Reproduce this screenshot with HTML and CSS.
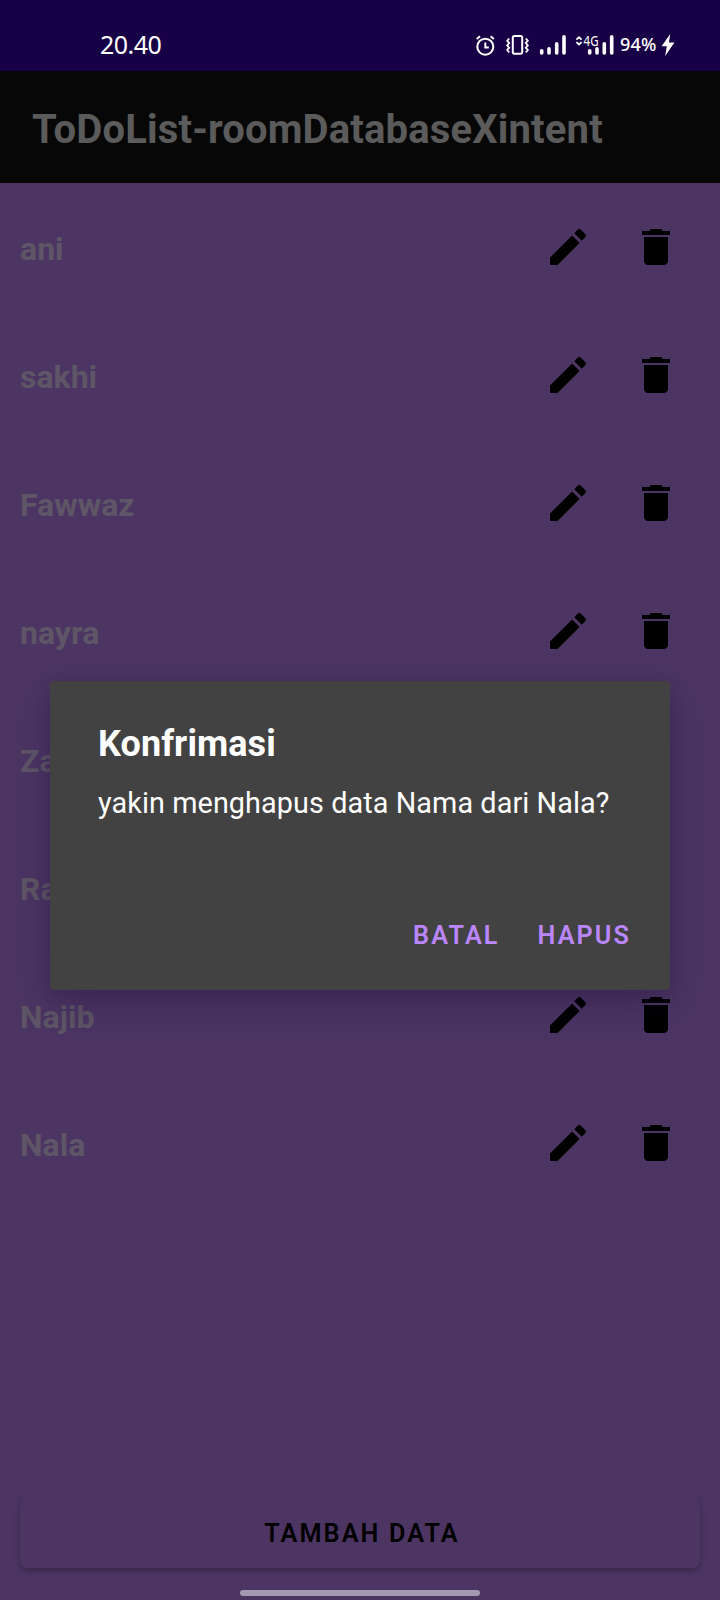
FILE: index.html
```html
<!DOCTYPE html>
<html lang="id">
<head>
<meta charset="utf-8">
<title>ToDoList-roomDatabaseXintent</title>
<link rel="stylesheet" href="styles.css">
</head>
<body>
<svg width="0" height="0" class="symbols">
  <symbol id="edit" viewBox="0 0 24 24"><path d="M3 17.25V21h3.75L17.81 9.94l-3.75-3.75L3 17.25zM20.71 7.04c.39-.39.39-1.02 0-1.41l-2.34-2.34c-.39-.39-1.02-.39-1.41 0l-1.83 1.83 3.75 3.75 1.83-1.83z"/></symbol>
  <symbol id="delete" viewBox="0 0 24 24"><path d="M6 19c0 1.1.9 2 2 2h8c1.1 0 2-.9 2-2V7H6v12zM19 4h-3.5l-1-1h-5l-1 1H5v2h14V4z"/></symbol>
</svg>
<div class="screen">
  <header class="status">
    <span class="clock">20.40</span>
    <div class="indicators">
      <svg class="glyphs" width="144" height="28" viewBox="0 0 144 28">
        <g class="line">
          <circle cx="10.3" cy="15.7" r="8"/>
          <path d="M10.3 11.5V16.5H13.8M1.8 8L5 5.2M15.6 5.2L18.8 8"/>
          <rect x="37.8" y="5" width="9.4" height="17.7" rx="1.6"/>
          <path class="waves" d="M34.2 7.5l-2 2.3 2 2.3-2 2.3 2 2.3-2 2.3 2 2.3M50.8 7.5l2 2.3-2 2.3 2 2.3-2 2.3 2 2.3-2 2.3"/>
          <path class="waves" d="M101.4 8.6l2.6-2.3 2.6 2.3M101.4 11.2l2.6 2.3 2.6-2.3"/>
        </g>
        <g class="bars">
          <path d="M66.7 19.8v2.1M74 17.8v4.1M81.7 12.8v9.1M89 5.8v16.1"/>
          <path d="M114.7 19.8v2.1M122 17.8v4.1M129.3 12.8v9.1M136.7 5.8v16.1"/>
        </g>
        <text x="108.6" y="15.2" textLength="15" lengthAdjust="spacingAndGlyphs" class="network">4G</text>
      </svg>
      <span class="battery">94%</span>
      <svg width="14" height="24" viewBox="0 0 14 24"><path d="M9.2 1L.6 13.3h5.2L4.2 23 13.4 9.6H7.9z"/></svg>
    </div>
  </header>
  <h1 class="appbar">ToDoList-roomDatabaseXintent</h1>
  <main class="list">
    <div class="row"><span class="name">ani</span><svg><use href="#edit"/></svg><svg><use href="#delete"/></svg></div>
    <div class="row"><span class="name">sakhi</span><svg><use href="#edit"/></svg><svg><use href="#delete"/></svg></div>
    <div class="row"><span class="name">Fawwaz</span><svg><use href="#edit"/></svg><svg><use href="#delete"/></svg></div>
    <div class="row"><span class="name">nayra</span><svg><use href="#edit"/></svg><svg><use href="#delete"/></svg></div>
    <div class="row"><span class="name">Za</span><svg><use href="#edit"/></svg><svg><use href="#delete"/></svg></div>
    <div class="row"><span class="name">Ra</span><svg><use href="#edit"/></svg><svg><use href="#delete"/></svg></div>
    <div class="row"><span class="name">Najib</span><svg><use href="#edit"/></svg><svg><use href="#delete"/></svg></div>
    <div class="row"><span class="name">Nala</span><svg><use href="#edit"/></svg><svg><use href="#delete"/></svg></div>
  </main>
  <button class="add">TAMBAH DATA</button>
  <div class="handle"></div>
  <section class="dialog">
    <h2 class="dialog-title">Konfrimasi</h2>
    <p class="message">yakin menghapus data Nama dari Nala?</p>
    <div class="actions"><button>BATAL</button><button>HAPUS</button></div>
  </section>
</div>
</body>
</html>
```
FILE: styles.css
```css
* { box-sizing: border-box; margin: 0; }
body { font-family: Roboto, sans-serif; background: #4c3563; }
button { font: inherit; border: 0; background: none; padding: 0; }
.symbols { position: absolute; }
.screen {
  position: relative;
  width: 720px;
  height: 1600px;
  overflow: hidden;
  display: flex;
  flex-direction: column;
  background: #4c3563;
}
.status {
  height: 71px;
  flex: none;
  padding: 19px 45px 0 100px;
  display: flex;
  justify-content: space-between;
  align-items: center;
  background: #180047;
  color: #fff;
  font-family: "Noto Sans", sans-serif;
}
.clock { font-size: 25px; letter-spacing: -0.5px; padding-bottom: 3px; }
.indicators { display: flex; align-items: center; fill: #fff; }
.line { fill: none; stroke: #fff; stroke-width: 2; }
.waves { stroke-width: 1.8; }
.bars { stroke: #fff; stroke-width: 3.6; stroke-linecap: round; }
.network { font-size: 14.6px; }
.battery { width: 42px; padding: 0 0 2px 1px; font-size: 18px; font-weight: 500; letter-spacing: 0.2px; white-space: nowrap; }
.appbar {
  height: 112px;
  flex: none;
  padding-left: 32px;
  background: #070707;
  color: #5b5b5b;
  font-size: 40px;
  font-weight: 700;
  line-height: 118px;
  letter-spacing: 0.16px;
}
.list { flex: 1; }
.row {
  height: 128px;
  padding: 0 40px 0 20px;
  display: flex;
  align-items: center;
  gap: 40px;
}
.row svg { width: 48px; height: 48px; }
.name { flex: 1; font-size: 32px; font-weight: 700; color: #5e5666; line-height: 38px; padding-top: 3px; }
.add {
  flex: none;
  height: 71px;
  margin: 0 20px 22px;
  padding: 2px 0 0 4px;
  border-radius: 8px;
  background: #4c3563;
  box-shadow: 0 3px 6px rgba(0, 0, 0, .28);
  color: #000;
  font-size: 25.2px;
  font-weight: 600;
  letter-spacing: 2.1px;
}
.handle { flex: none; width: 240px; height: 6px; margin: 0 auto 4px; border-radius: 3px; background: #a599b1; }
.dialog {
  position: absolute;
  left: 50px;
  top: 681px;
  width: 620px;
  height: 309px;
  padding: 42px 39px 32px 48px;
  display: flex;
  flex-direction: column;
  border-radius: 4px;
  background: #424242;
  box-shadow: 0 14px 40px rgba(20, 0, 50, .26), 0 4px 14px rgba(20, 0, 50, .1);
  color: #fff;
}
.dialog-title { font-size: 36px; font-weight: 700; line-height: 42px; letter-spacing: 0.08px; }
.message { font-size: 28.8px; line-height: 34px; margin-top: 21px; letter-spacing: 0.08px; }
.actions { margin-top: auto; display: flex; justify-content: flex-end; gap: 38px; }
.actions button { color: #bb86fc; font-size: 25.2px; font-weight: 600; letter-spacing: 2.1px; line-height: 44px; }
```
